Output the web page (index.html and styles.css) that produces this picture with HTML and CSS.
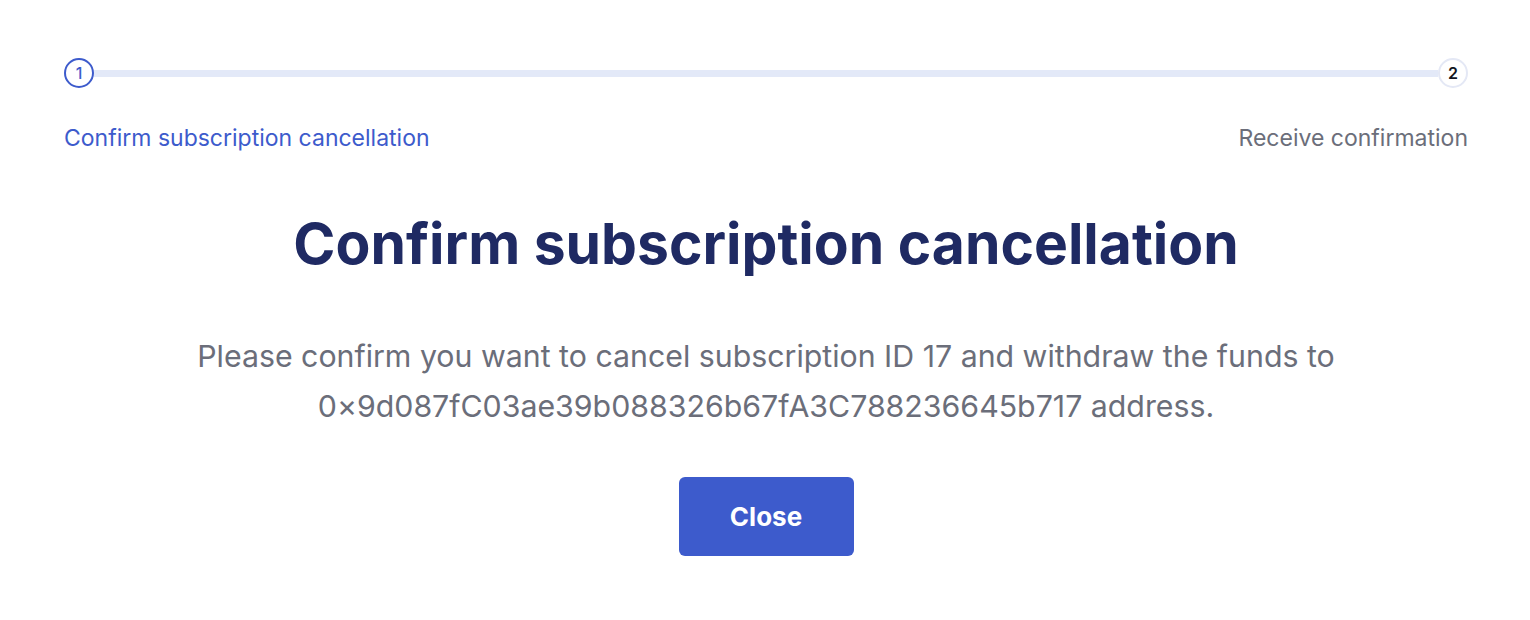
FILE: index.html
```html
<!DOCTYPE html>
<html>
<head>
<meta charset="utf-8">
<link rel="stylesheet" href="styles.css">
</head>
<body>
<div class="modal">
  <div class="stepper">
    <div class="track">
      <div class="dot dot-active">1</div>
      <div class="line"></div>
      <div class="dot dot-next">2</div>
    </div>
    <div class="labels">
      <span class="label label-active">Confirm subscription cancellation</span>
      <span class="label">Receive confirmation</span>
    </div>
  </div>
  <h1 class="title">Confirm subscription cancellation</h1>
  <p class="message">Please confirm you want to cancel subscription ID 17 and withdraw the funds to<br>0×9d087fC03ae39b088326b67fA3C788236645b717 address.</p>
  <button class="btn">Close</button>
</div>
</body>
</html>
```
FILE: styles.css
```css
html, body {
  margin: 0;
  padding: 0;
  background: #ffffff;
}
body {
  font-family: "Inter", "Noto Sans", sans-serif;
  font-variant-ligatures: none;
}
.modal {
  width: 1530px;
  height: 620px;
  box-sizing: border-box;
  padding: 58px 62px 0 64px;
  display: flex;
  flex-direction: column;
  align-items: center;
}
.stepper {
  width: 100%;
}
.track {
  display: flex;
  align-items: center;
}
.dot {
  width: 30px;
  height: 30px;
  box-sizing: border-box;
  border-radius: 50%;
  display: flex;
  align-items: center;
  justify-content: center;
  font-size: 16px;
  font-weight: 600;
  flex: none;
}
.dot-active {
  border: 2px solid #3d5bcc;
  color: #3d5bcc;
  font-weight: 500;
}
.dot-next {
  border: 2px solid #e4e8f5;
  color: #111522;
}
.line {
  flex: 1;
  height: 7px;
  background: #e3e9f8;
}
.labels {
  display: flex;
  justify-content: space-between;
  margin-top: 35px;
}
.label {
  font-size: 23px;
  color: #6b6e7a;
  line-height: 30px;
}
.label-active {
  color: #3d5bcc;
}
.title {
  margin: 51px 0 0 0;
  font-size: 57px;
  font-weight: 700;
  color: #1f2a63;
  line-height: 80px;
}
.message {
  margin: 47px 0 0 0;
  text-align: center;
  font-size: 30.3px;
  line-height: 50px;
  color: #6b6e7a;
}
.btn {
  margin-top: 46px;
  width: 175px;
  height: 79px;
  border: none;
  border-radius: 6px;
  background: #3d5bcc;
  color: #ffffff;
  font-family: inherit;
  font-size: 26px;
  font-weight: 700;
}
```
